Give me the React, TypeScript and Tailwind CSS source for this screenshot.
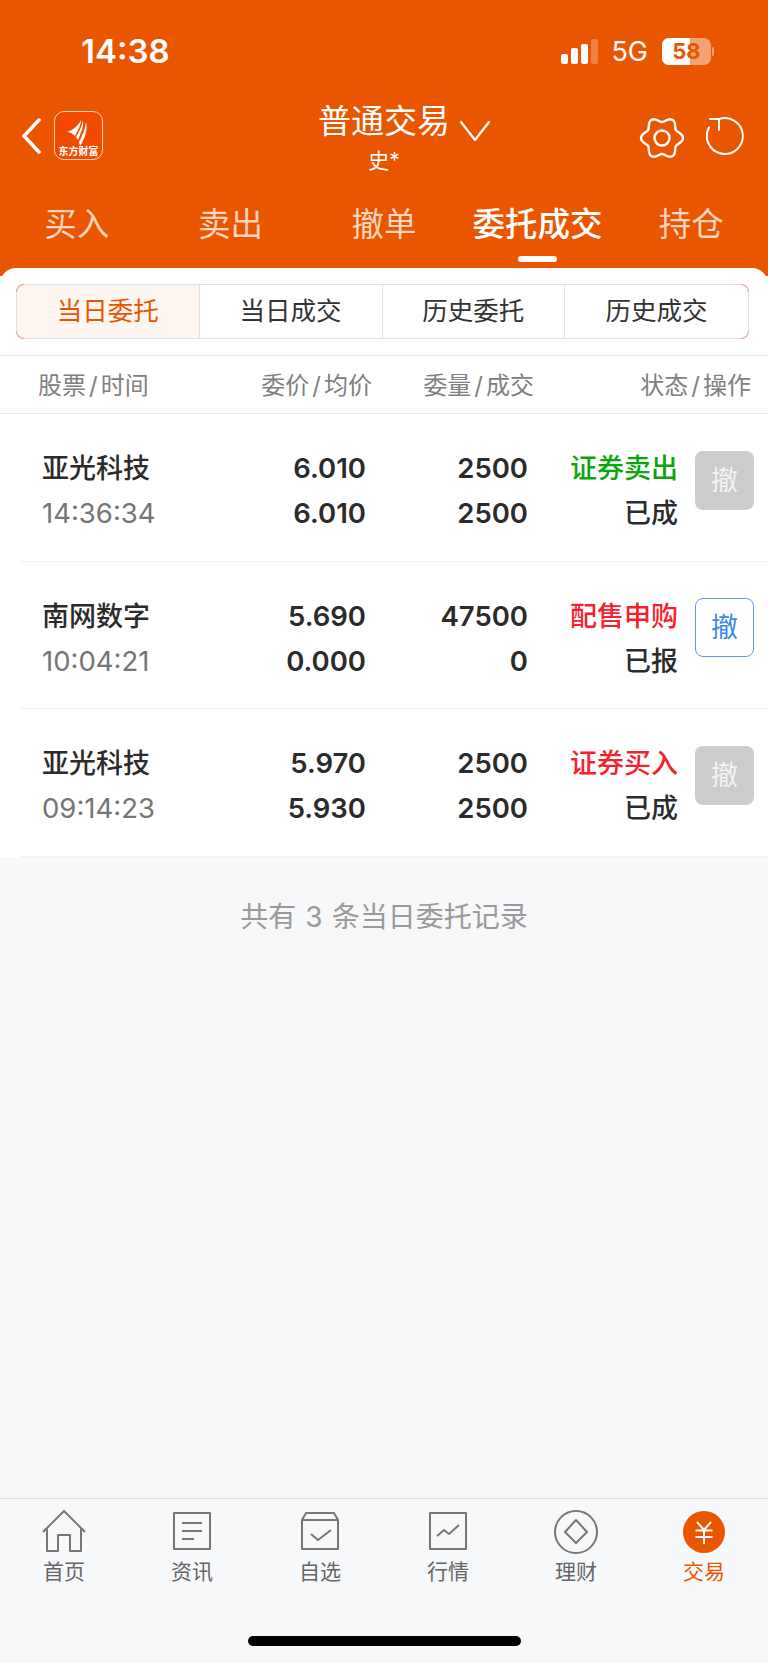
const font = { fontFamily: '"Inter", "Noto Sans CJK SC", sans-serif' };

const topTabs = ['买入', '卖出', '撤单', '委托成交', '持仓'];
const subTabs = ['当日委托', '当日成交', '历史委托', '历史成交'];

const orders = [
  { name: '亚光科技', time: '14:36:34', price: '6.010', avg: '6.010', qty: '2500', deal: '2500', type: '证券卖出', color: 'text-[#0aa50f]', state: '已成', active: false },
  { name: '南网数字', time: '10:04:21', price: '5.690', avg: '0.000', qty: '47500', deal: '0', type: '配售申购', color: 'text-[#f5222d]', state: '已报', active: true },
  { name: '亚光科技', time: '09:14:23', price: '5.970', avg: '5.930', qty: '2500', deal: '2500', type: '证券买入', color: 'text-[#f5222d]', state: '已成', active: false },
];

// six soft lobes round a circle, the settings icon
const gearPath = Array.from({ length: 96 }, (_, i) => {
  const a = (i / 96) * Math.PI * 2;
  const r = 18.5 + 2.5 * Math.cos(6 * a);
  return `${i === 0 ? 'M' : 'L'}${(23 + r * Math.cos(a)).toFixed(2)} ${(22 + r * Math.sin(a)).toFixed(2)}`;
}).join('') + 'Z';

function HeadCell({ a, b, className }: { a: string; b: string; className: string }) {
  return (
    <div className={`whitespace-nowrap ${className}`}>
      {a}
      <span className="mx-[3px]">/</span>
      {b}
    </div>
  );
}

function NavIcon({ name }: { name: string }) {
  if (name === '交易') {
    return (
      <svg width="44" height="44" viewBox="0 0 44 44" fill="none">
        <circle cx="22" cy="22" r="21" fill="#ea5600" />
        <path d="M15 12l7 8 7-8M13.500 20.500h17M13.500 27h17M22 20v14" stroke="#fff" strokeWidth="2" />
      </svg>
    );
  }
  return (
    <svg width="46" height="46" viewBox="0 0 46 46" fill="none" stroke="#777" strokeWidth="2" strokeLinejoin="round">
      {name === '首页' && <path d="M2 23L23 2l21 21M6 20v22h11V26h12v16h11V20" />}
      {name === '资讯' && <path d="M5 4h36v36H5zM13 14h20M13 22h20M13 30h12" />}
      {name === '自选' && <path d="M5 11l4-7h28l4 7M5 11h36v29H5zM14 25l7 6 13-10" />}
      {name === '行情' && <path d="M5 4h36v36H5zM12 27l7-6 5 4 10-9" />}
      {name === '理财' && (
        <>
          <circle cx="23" cy="23" r="21" />
          <path d="M23 11l11 12-11 11-11-11z" />
        </>
      )}
    </svg>
  );
}

function App() {
  return (
    <div className="w-[768px] h-[1663px] flex flex-col bg-[#f7f8fa] overflow-hidden" style={font}>
      <header className="bg-[#ea5600] text-white h-[276px] shrink-0">
        <div className="h-[102px] flex items-center">
          <span className="ml-[81px] text-[33px] font-semibold leading-none">14:38</span>
          <div className="ml-auto flex items-center mr-[54px]">
            <div className="flex items-end gap-[3px] h-[25px]">
              <div className="w-[7px] h-[10px] bg-white rounded-[2px]" />
              <div className="w-[7px] h-[16px] bg-white rounded-[2px]" />
              <div className="w-[7px] h-[20px] bg-white rounded-[2px]" />
              <div className="w-[7px] h-[25px] bg-white/25 rounded-[2px]" />
            </div>
            <span className="ml-[13px] text-[27px] leading-none">5G</span>
            <div className="ml-[14px] relative w-[49px] h-[27px] rounded-[7px] bg-white/45 overflow-hidden flex items-center justify-center">
              <div className="absolute left-0 top-0 h-full w-[28px] bg-white" />
              <span className="relative text-[#ea5600] text-[22px] font-bold leading-none">58</span>
            </div>
            <div className="ml-[1px] w-[2px] h-[9px] bg-white/45 rounded-r" />
          </div>
        </div>

        <div className="h-[96px] flex items-start">
          <div className="w-[200px] flex items-center pl-[21px] pt-[9px]">
            <svg width="20" height="36" viewBox="0 0 20 36" fill="none">
              <path d="M18 2L3 18l15 16" stroke="#fff" strokeWidth="3.500" strokeLinecap="round" strokeLinejoin="round" />
            </svg>
            <div className="ml-[13px] w-[49px] h-[49px] rounded-[10px] bg-[#f24a00] border border-[#ffd2bd] flex flex-col items-center justify-end pb-[3px]">
              <svg width="24" height="28" viewBox="0 0 24 28" fill="#fff" className="mb-[-1px] mr-[2px]">
                <path d="M1 13C7 11 12 7 15 1c0 5-3 10-6 16-2-2-5-4-8-4z" />
                <path d="M17 1c1 6-2 13-5 20l-2-3c3-5 6-11 7-17z" />
                <path d="M20 3c2 7-1 17-6 24l-1-4c3-6 6-12 7-20z" />
              </svg>
              <span className="text-[10px] leading-none font-bold text-white whitespace-nowrap" style={{ fontFamily: '"Noto Sans CJK SC", serif' }}>东方财富</span>
            </div>
          </div>
          <div className="flex-1 flex flex-col items-center">
            <div className="relative mt-[-3px]">
              <div className="text-[33px] leading-[44px]">普通交易</div>
              <svg width="32" height="24" viewBox="0 0 32 24" fill="none" className="absolute left-[141px] top-[20px]">
                <path d="M2 3l14 18L30 3" stroke="#fff" strokeWidth="2.200" strokeLinecap="round" strokeLinejoin="round" />
              </svg>
            </div>
            <div className="text-[21px] leading-[28px] mt-[4px]">史*</div>
          </div>
          <div className="w-[200px] flex justify-end items-center gap-[21px] pr-[24px] pt-[14px]">
            <svg width="46" height="44" viewBox="0 0 46 44" fill="none" stroke="#fff" strokeWidth="2.400" strokeLinejoin="round">
              <path d={gearPath} />
              <circle cx="23" cy="22" r="7.500" />
            </svg>
            <svg width="38" height="40" viewBox="0 0 38 40" fill="none" stroke="#fff" strokeWidth="2" strokeLinecap="round" strokeLinejoin="round" className="mb-[4px]">
              <path d="M13 3A18 18 0 1 1 3 11.500M4 3h9v11" />
            </svg>
          </div>
        </div>

        <div className="h-[70px] grid grid-cols-5 pt-[1px]">
          {topTabs.map((t) => {
            const on = t === '委托成交';
            return (
              <div key={t} className={`flex flex-col items-center text-[32.500px] leading-[52px] whitespace-nowrap ${on ? 'font-medium text-white' : 'text-white/75'}`}>
                {t}
                {on && <div className="w-[39px] h-[6px] rounded-full bg-white mt-[5px]" />}
              </div>
            );
          })}
        </div>
      </header>

      <main className="flex-1 mt-[-8px]">
        <div className="bg-white rounded-t-[16px] pt-[16px]">
          <div className="relative ml-[16px] mr-[19px] h-[55px]">
            <div className="h-full grid grid-cols-4 border border-[#dfe1e6] rounded-[8px] overflow-hidden">
              {subTabs.map((t, i) => (
                <div key={t} className={`flex items-center justify-center text-[25.500px] ${i === 0 ? 'bg-[#fef4f0] text-[#ea5600]' : 'text-[#333]'} ${i < 3 ? 'border-r border-[#dfe1e6]' : ''}`}>
                  {t}
                </div>
              ))}
            </div>
            <span className="absolute left-0 top-0 w-[8px] h-[8px] border-l border-t border-[#f3a27b] rounded-tl-[8px]" />
            <span className="absolute left-0 bottom-0 w-[8px] h-[8px] border-l border-b border-[#f3a27b] rounded-bl-[8px]" />
            <span className="absolute right-0 top-0 w-[8px] h-[8px] border-r border-t border-[#f3a27b] rounded-tr-[8px]" />
            <span className="absolute right-0 bottom-0 w-[8px] h-[8px] border-r border-b border-[#f3a27b] rounded-br-[8px]" />
          </div>
          <div className="mt-[16px] h-[59px] pt-[2px] border-y border-[#e8e9ec] flex items-center text-[24px] text-[#808080]">
            <HeadCell a="股票" b="时间" className="w-[150px] pl-[38px]" />
            <HeadCell a="委价" b="均价" className="w-[222px] text-right" />
            <HeadCell a="委量" b="成交" className="w-[162px] text-right" />
            <HeadCell a="状态" b="操作" className="w-[217px] text-right" />
          </div>
          {orders.map((o) => (
            <div key={o.time} className="ml-[20px] h-[147.500px] border-b border-[#f1f2f4] flex items-center text-[27.500px] leading-[45px] text-[#2b2b2b]">
              <div className="w-[150px] pl-[22px] pt-[8px] whitespace-nowrap">
                <div className="font-medium text-[27px]">{o.name}</div>
                <div className="text-[#757575] text-[27.500px]">{o.time}</div>
              </div>
              <div className="w-[196px] pt-[8px] text-right font-semibold">
                <div>{o.price}</div>
                <div>{o.avg}</div>
              </div>
              <div className="w-[162px] pt-[8px] text-right font-semibold">
                <div>{o.qty}</div>
                <div>{o.deal}</div>
              </div>
              <div className="w-[150px] pt-[8px] text-right font-medium text-[27px] whitespace-nowrap">
                <div className={o.color}>{o.type}</div>
                <div>{o.state}</div>
              </div>
              <div className={`ml-[17px] mb-[14px] w-[59px] h-[59px] rounded-[8px] flex items-center justify-center text-[27px] ${o.active ? 'border border-[#5c9bef] text-[#3f8ae8] bg-white' : 'bg-[#cccccc] text-[#f2f2f2]'}`}>
                撤
              </div>
            </div>
          ))}
        </div>
        <div className="mt-[40px] text-center text-[28px] leading-[40px] text-[#9a9a9a]">
          共有<span className="mx-[9px]">3</span>条当日委托记录
        </div>
      </main>

      <nav className="h-[165px] shrink-0 border-t border-[#dedfe2] relative">
        <div className="grid grid-cols-6 pt-[10px]">
          {['首页', '资讯', '自选', '行情', '理财', '交易'].map((n) => (
            <div key={n} className="flex flex-col items-center">
              <div className="h-[46px] flex items-center justify-center">
                <NavIcon name={n} />
              </div>
              <span className={`mt-[3px] text-[21px] leading-[28px] ${n === '交易' ? 'text-[#ea5600]' : 'text-[#666]'}`}>{n}</span>
            </div>
          ))}
        </div>
        <div className="absolute left-[248px] top-[137px] w-[273px] h-[10px] rounded-full bg-black" />
      </nav>
    </div>
  );
}

export default App;
